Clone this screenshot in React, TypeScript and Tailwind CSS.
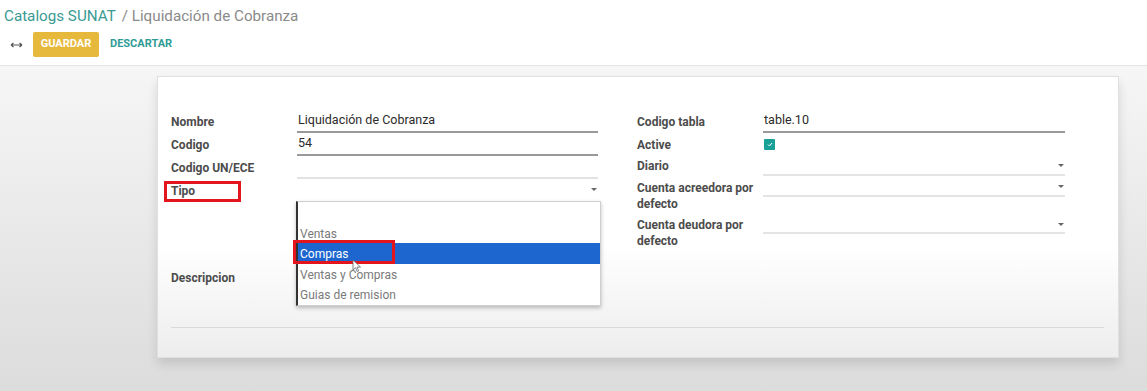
import type { ReactNode } from "react";

function Caret() {
  return <span className="ml-auto mr-[1px] h-0 w-0 border-x-[3px] border-t-[3px] border-x-transparent border-t-[#666]" />;
}

function Field({
  label,
  h = "h-[23px]",
  children,
  line = "border-[#999]",
  labelClass = "pt-[4px]",
}: {
  label: ReactNode;
  h?: string;
  children?: ReactNode;
  line?: string;
  labelClass?: string;
}) {
  return (
    <div className="flex items-start">
      <div className={`w-[126px] shrink-0 text-[12px] font-bold leading-[16px] text-[#4c4c4c] ${labelClass}`}>{label}</div>
      <div className={`flex flex-1 items-center border-b-2 ${line} ${h} pl-[1px] text-[12.5px] text-[#2b2b2b]`}>{children}</div>
    </div>
  );
}

export default function App() {
  const options = ["", "Ventas", "Compras", "Ventas y Compras", "Guias de remision"];
  return (
    <div className="relative h-[391px] w-[1147px] overflow-hidden bg-white font-['Roboto',sans-serif]">
      <header className="h-[66px] border-b border-[#e4e4e4] bg-white">
        <div className="flex items-baseline gap-[6px] px-[4px] pt-[5px] text-[15.2px] leading-[22px]">
          <span className="text-[#3a9a93]">Catalogs SUNAT</span>
          <span className="text-[#8a8a8a]">/ Liquidación de Cobranza</span>
        </div>
        <div className="mt-[5px] flex items-center">
          <svg width="13" height="6" viewBox="0 0 13 6" className="ml-[10px] mr-[10px] text-[#555]">
            <path d="M1 3h11M1 3l2.5-2M1 3l2.5 2M12 3l-2.5-2M12 3l-2.5 2" stroke="currentColor" strokeWidth="1.2" fill="none" />
          </svg>
          <button className="h-[25px] w-[66px] rounded-[2px] bg-[#e6b83c] text-[11px] font-bold text-white">GUARDAR</button>
          <button className="ml-[11px] text-[11px] font-bold text-[#2f9c95]">DESCARTAR</button>
        </div>
      </header>

      <main className="h-[325px] bg-gradient-to-b from-[#f6f6f6] to-[#dcdcdc] pl-[157px] pt-[10px]">
        <div className="relative h-[282px] w-[962px] border border-[#e0e0e0] bg-gradient-to-b from-white from-60% to-[#ededed] shadow-[0_6px_10px_rgba(0,0,0,0.12)]">
          <div className="flex pl-[13px] pt-[33px]">
            <div className="w-[427px]">
              <Field label="Nombre">Liquidación de Cobranza</Field>
              <Field label="Codigo">54</Field>
              <Field label="Codigo UN/ECE" line="border-[#e2e2e2]" />
              <div className="relative">
                <Field label="Tipo" line="border-transparent">
                  <Caret />
                </Field>
                <div className="absolute left-[-7px] top-[2px] h-[21px] w-[77px] border-[3px] border-[#e3161e]" />
                <div className="absolute left-[125px] top-[22px] z-10 w-[305px] border border-l-2 border-[#cfcfcf] border-l-[#333] bg-white shadow-[0_2px_4px_rgba(0,0,0,0.25)]">
                  {options.map((o, i) => (
                    <div
                      key={i}
                      className={`h-[20.6px] pl-[2px] text-[12px] leading-[22px] ${
                        o === "Compras" ? "bg-[#1d66d0] text-white" : "text-[#7a7a7a]"
                      }`}
                    >
                      {o}
                    </div>
                  ))}
                  <div className="absolute left-[-5px] top-[38px] h-[24px] w-[102px] border-[3px] border-[#e3161e]" />
                  <svg width="10" height="14" viewBox="0 0 10 14" className="absolute left-[54px] top-[57px]">
                    <path d="M1 1v10l2.5-2.3 1.7 3.8 1.5-.7-1.7-3.7H8.5z" fill="#fff" stroke="#666" strokeWidth="0.8" />
                  </svg>
                </div>
              </div>
              <div className="mt-[67px] flex">
                <div className="w-[126px] text-[12px] font-bold text-[#4c4c4c]">Descripcion</div>
              </div>
            </div>

            <div className="ml-[39px] w-[428px]">
              <Field label="Codigo tabla">table.10</Field>
              <Field label="Active" line="border-transparent">
                <span className="mt-[2px] flex h-[11px] w-[11px] items-center justify-center rounded-[1px] bg-[#1aa197]">
                  <svg width="6" height="5" viewBox="0 0 6 5">
                    <path d="M1 2.5l1.5 1.5L5 1" stroke="white" strokeWidth="1" fill="none" />
                  </svg>
                </span>
              </Field>
              <Field label="Diario" h="h-[20px]" line="border-[#e4e4e4]" labelClass="pt-[2px]">
                <Caret />
              </Field>
              <div className="h-[2px]" />
              <Field label={<>Cuenta acreedora por<br />defecto</>} h="h-[19px]" line="border-[#e4e4e4]" labelClass="pt-[2px]">
                <Caret />
              </Field>
              <div className="h-[5px]" />
              <Field label={<>Cuenta deudora por<br />defecto</>} h="h-[17px]" line="border-[#e4e4e4]" labelClass="pt-[0px]">
                <Caret />
              </Field>
            </div>
          </div>
          <div className="absolute bottom-[29px] left-[13px] right-[14px] h-px bg-[#d9d9d9]" />
        </div>
      </main>
    </div>
  );
}
